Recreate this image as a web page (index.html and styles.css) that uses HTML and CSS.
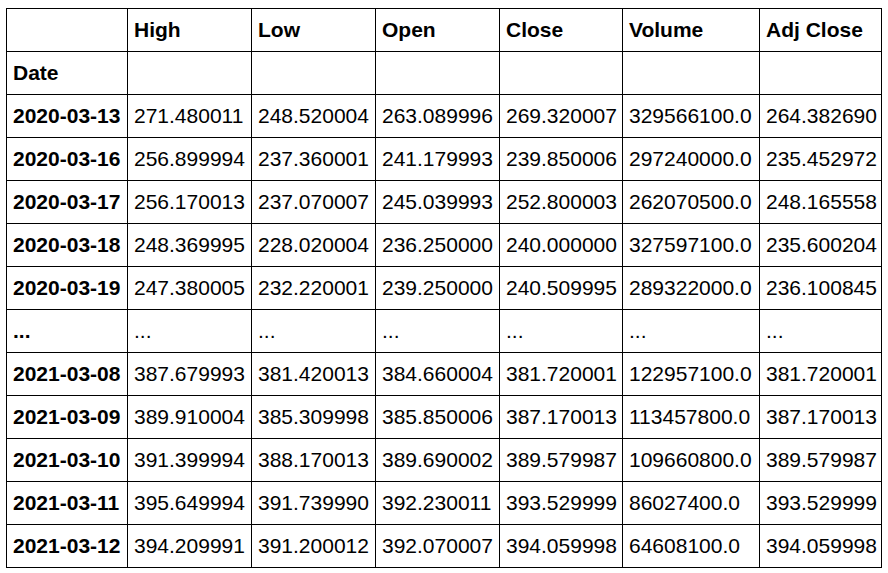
FILE: index.html
```html
<!DOCTYPE html>
<html>
<head>
<meta charset="utf-8">
<link rel="stylesheet" href="styles.css">
</head>
<body>
<table class="df">
  <colgroup>
    <col class="c-idx"><col class="c-n"><col class="c-n"><col class="c-n"><col class="c-n2"><col class="c-vol"><col class="c-adj">
  </colgroup>
  <thead>
    <tr><th></th><th>High</th><th>Low</th><th>Open</th><th>Close</th><th>Volume</th><th>Adj Close</th></tr>
    <tr><th>Date</th><td></td><td></td><td></td><td></td><td></td><td></td></tr>
  </thead>
  <tbody>
    <tr><th>2020-03-13</th><td>271.480011</td><td>248.520004</td><td>263.089996</td><td>269.320007</td><td>329566100.0</td><td>264.382690</td></tr>
    <tr><th>2020-03-16</th><td>256.899994</td><td>237.360001</td><td>241.179993</td><td>239.850006</td><td>297240000.0</td><td>235.452972</td></tr>
    <tr><th>2020-03-17</th><td>256.170013</td><td>237.070007</td><td>245.039993</td><td>252.800003</td><td>262070500.0</td><td>248.165558</td></tr>
    <tr><th>2020-03-18</th><td>248.369995</td><td>228.020004</td><td>236.250000</td><td>240.000000</td><td>327597100.0</td><td>235.600204</td></tr>
    <tr><th>2020-03-19</th><td>247.380005</td><td>232.220001</td><td>239.250000</td><td>240.509995</td><td>289322000.0</td><td>236.100845</td></tr>
    <tr><th>...</th><td>...</td><td>...</td><td>...</td><td>...</td><td>...</td><td>...</td></tr>
    <tr><th>2021-03-08</th><td>387.679993</td><td>381.420013</td><td>384.660004</td><td>381.720001</td><td>122957100.0</td><td>381.720001</td></tr>
    <tr><th>2021-03-09</th><td>389.910004</td><td>385.309998</td><td>385.850006</td><td>387.170013</td><td>113457800.0</td><td>387.170013</td></tr>
    <tr><th>2021-03-10</th><td>391.399994</td><td>388.170013</td><td>389.690002</td><td>389.579987</td><td>109660800.0</td><td>389.579987</td></tr>
    <tr><th>2021-03-11</th><td>395.649994</td><td>391.739990</td><td>392.230011</td><td>393.529999</td><td>86027400.0</td><td>393.529999</td></tr>
    <tr><th>2021-03-12</th><td>394.209991</td><td>391.200012</td><td>392.070007</td><td>394.059998</td><td>64608100.0</td><td>394.059998</td></tr>
  </tbody>
</table>
</body>
</html>
```
FILE: styles.css
```css
html, body {
  background: #ffffff;
}
body {
  margin: 8px 6px;
  font-family: "Liberation Sans", Arial, sans-serif;
  font-size: 21px;
  color: #000000;
}
.df {
  border-collapse: collapse;
  table-layout: fixed;
  width: 776px;
}
.c-idx { width: 121px; }
.c-n { width: 124px; }
.c-n2 { width: 123px; }
.c-vol { width: 137px; }
.c-adj { width: 122px; }
.df th,
.df td {
  border: 1px solid #000000;
  height: 43px;
  padding: 0 5px 0 6px;
  text-align: left;
  vertical-align: middle;
  white-space: nowrap;
  line-height: 24px;
  box-sizing: border-box;
}
.df th {
  font-weight: bold;
}
.df td {
  font-weight: normal;
}
```
